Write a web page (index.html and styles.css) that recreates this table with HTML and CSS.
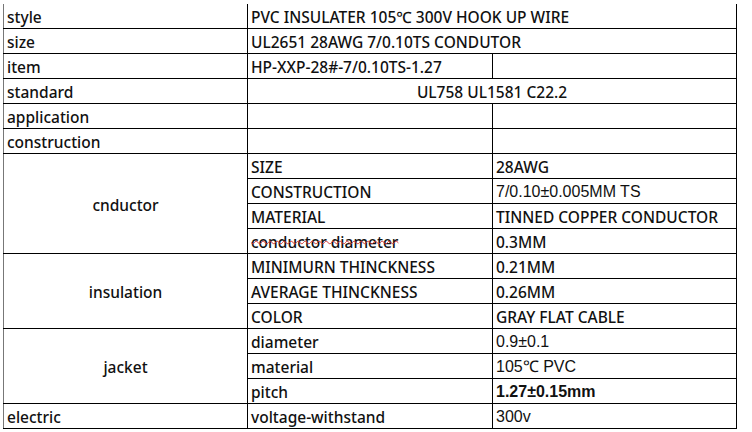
FILE: index.html
```html
<!DOCTYPE html>
<html>
<head>
<meta charset="utf-8">
<link rel="stylesheet" href="styles.css">
</head>
<body>
<table class="spec">
  <colgroup><col class="c1"><col class="c2"><col class="c3"></colgroup>
  <tr class="first"><td>style</td><td colspan="2">PVC INSULATER 105℃ 300V HOOK UP WIRE</td></tr>
  <tr><td>size</td><td colspan="2">UL2651 28AWG 7/0.10TS CONDUTOR</td></tr>
  <tr><td>item</td><td>HP-XXP-28#-7/0.10TS-1.27</td><td></td></tr>
  <tr><td>standard</td><td colspan="2" class="center">UL758 UL1581 C22.2</td></tr>
  <tr><td>application</td><td></td><td></td></tr>
  <tr><td>construction</td><td></td><td></td></tr>
  <tr><td rowspan="4" class="center group">cnductor</td><td>SIZE</td><td>28AWG</td></tr>
  <tr><td>CONSTRUCTION</td><td class="arial">7/0.10±0.005MM TS</td></tr>
  <tr><td>MATERIAL</td><td>TINNED COPPER CONDUCTOR</td></tr>
  <tr><td><span class="spell">conductor diameter</span></td><td>0.3MM</td></tr>
  <tr><td rowspan="3" class="center group">insulation</td><td>MINIMURN THINCKNESS</td><td>0.21MM</td></tr>
  <tr><td>AVERAGE THINCKNESS</td><td>0.26MM</td></tr>
  <tr><td>COLOR</td><td>GRAY FLAT CABLE</td></tr>
  <tr><td rowspan="3" class="center group">jacket</td><td>diameter</td><td class="arial">0.9±0.1</td></tr>
  <tr><td>material</td><td class="arial">105℃ PVC</td></tr>
  <tr><td>pitch</td><td class="arial bold">1.27±0.15mm</td></tr>
  <tr><td>electric</td><td>voltage-withstand</td><td class="arial">300v</td></tr>
</table>
</body>
</html>
```

FILE: styles.css
```css
html, body {
  margin: 0;
  padding: 0;
  background: #ffffff;
}

.spec {
  margin: 4px 0 0 3px;
  border-collapse: collapse;
  table-layout: fixed;
  width: 733px;
  font-family: "Noto Sans", "Open Sans", sans-serif;
  font-size: 15.5px;
  font-weight: 500;
  color: #111111;
}

.c1 { width: 244px; }
.c2 { width: 245px; }
.c3 { width: 244px; }

.spec td {
  height: 22px;
  padding: 2px 0 0 3px;
  border: 1px solid #000000;
  line-height: 22px;
  white-space: nowrap;
  overflow: hidden;
  vertical-align: middle;
}

.spec tr.first td {
  border-top: none;
}

.spec td:first-child {
  border-left-color: #777777;
}

.spec td.center {
  text-align: center;
  padding-left: 0;
}

.spec td.group {
  border-left-color: #777777;
}

.arial {
  font-family: "Liberation Sans", Arial, sans-serif;
  font-size: 16px;
}

.bold {
  font-weight: bold;
}

.spell {
  text-decoration: line-through wavy #d23a3a;
  text-decoration-thickness: 1px;
}
```
